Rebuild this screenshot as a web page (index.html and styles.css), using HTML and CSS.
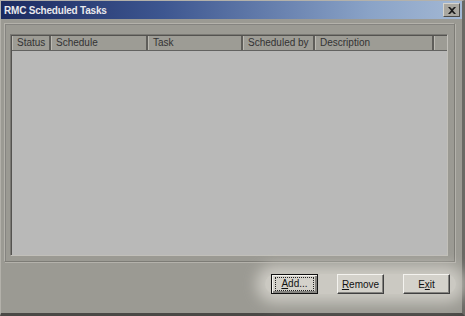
FILE: index.html
```html
<!DOCTYPE html>
<html lang="en">
<head>
    <meta charset="UTF-8">
    <title>RMC Scheduled Tasks</title>
    <link rel="stylesheet" href="styles.css">
</head>
<body>
    <div class="window">
        <div class="titlebar">
            <span class="title">RMC Scheduled Tasks</span>
            <div class="close">
                <svg width="8" height="7" viewBox="0 0 8 7">
                    <path d="M0 0 L2 0 L4 2 L6 0 L8 0 L5 3.5 L8 7 L6 7 L4 5 L2 7 L0 7 L3 3.5 Z" fill="#1a1a1a"/>
                </svg>
            </div>
        </div>
        <div class="content">
            <div class="frame">
                <div class="list">
                    <div class="header">
                        <div class="col c-status">Status</div>
                        <div class="col c-schedule">Schedule</div>
                        <div class="col c-task">Task</div>
                        <div class="col c-by">Scheduled by</div>
                        <div class="col c-desc">Description</div>
                        <div class="col c-rest"></div>
                    </div>
                    <div class="rows"></div>
                </div>
            </div>
            <div class="actions">
                <button class="btn default"><span class="focus"><u>A</u>dd...</span></button>
                <button class="btn"><u>R</u>emove</button>
                <button class="btn">E<u>x</u>it</button>
            </div>
        </div>
    </div>
</body>
</html>
```

FILE: styles.css
```css
body {
    margin: 0;
    padding: 0;
    background: #9b9a93;
    font-family: 'Liberation Sans', Arial, sans-serif;
}
.window {
    width: 465px;
    height: 316px;
    box-sizing: border-box;
    border-left: 1px solid #b3b1aa;
    border-top: 1px solid #b3b1aa;
    border-right: 3px solid #6a6964;
    border-bottom: 3px solid #4a4946;
    background: #9b9a93;
    display: flex;
    flex-direction: column;
}
.titlebar {
    height: 18px;
    background: linear-gradient(90deg, #1b2a60 0%, #3d5690 35%, #8aa3c7 80%, #a3b8d4 100%);
    display: flex;
    align-items: center;
    justify-content: space-between;
    padding: 0 2px 0 3px;
}
.title {
    color: #e8e8ec;
    font-weight: bold;
    font-size: 10px;
    letter-spacing: -0.2px;
}
.close {
    width: 15px;
    height: 12px;
    background: #a9a7a0;
    border: 1px solid;
    border-color: #d6d4cd #4c4b48 #4c4b48 #d6d4cd;
    display: flex;
    align-items: center;
    justify-content: center;
}
.content {
    flex: 1;
    display: flex;
    flex-direction: column;
    padding: 4px 7px 0 3px;
}
.frame {
    height: 239px;
    border: 1px solid;
    border-color: #b4b2ab #7d7c76 #7d7c76 #b4b2ab;
    box-shadow: inset 1px 1px 0 #858480, 1px 1px 0 #b4b2ab;
    padding: 10px 6px 5px 5px;
    box-sizing: border-box;
    display: flex;
}
.list {
    flex: 1;
    display: flex;
    flex-direction: column;
    border: 1px solid;
    border-color: #7a7974 #c2c0ba #c2c0ba #7a7974;
    box-shadow: inset 1px 1px 0 #545350;
    background: #b9b9b8;
}
.header {
    display: flex;
    height: 14px;
    margin: 1px 0 0 1px;
    background: #9d9c95;
    border-bottom: 1px solid #626260;
}
.col {
    box-sizing: border-box;
    font-size: 10px;
    color: #333;
    line-height: 14px;
    padding-left: 5px;
    border-right: 2px solid #5f5e5a;
    box-shadow: inset 1px 0 0 #bcbab3;
    white-space: nowrap;
    overflow: hidden;
}
.c-status { width: 39px; }
.c-schedule { width: 97px; }
.c-task { width: 95px; }
.c-by { width: 72px; }
.c-desc { width: 119px; }
.c-rest { flex: 1; border-right: none; }
.rows {
    flex: 1;
}
.actions {
    align-self: flex-end;
    margin-top: 12px;
    margin-right: -1px;
    display: flex;
    gap: 19px;
    padding: 0 6px;
    background: #cbc9c2;
    border-radius: 12px;
    box-shadow: 0 0 14px 9px #cbc9c2;
}
.btn {
    width: 47px;
    height: 20px;
    box-sizing: border-box;
    background: #d4d2cb;
    border: 1px solid;
    border-color: #f4f3ef #404040 #404040 #f4f3ef;
    box-shadow: inset -1px -1px 0 #858480;
    font-family: 'Liberation Sans', Arial, sans-serif;
    font-size: 10px;
    color: #111;
    padding: 0;
    display: flex;
    align-items: center;
    justify-content: center;
}
.btn.default {
    border: 1px solid #111;
    box-shadow: inset 1px 1px 0 #f4f3ef, inset -2px -2px 0 #858480;
}
.focus {
    border: 1px dotted #222;
    width: 37px;
    height: 12px;
    line-height: 12px;
    text-align: center;
}
```
